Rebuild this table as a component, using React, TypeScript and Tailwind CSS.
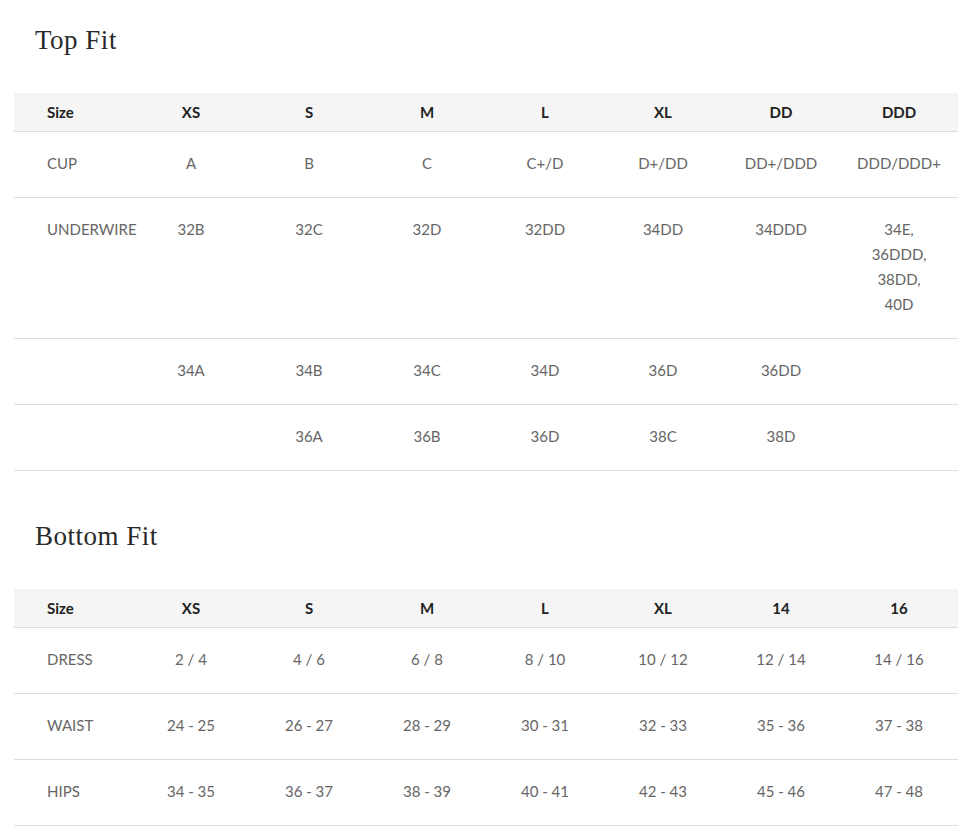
import React from "react";

type Table = {
  title: string;
  head: string[];
  rows: string[][][];
};

const topFit: Table = {
  title: "Top Fit",
  head: ["Size", "XS", "S", "M", "L", "XL", "DD", "DDD"],
  rows: [
    [["CUP"], ["A"], ["B"], ["C"], ["C+/D"], ["D+/DD"], ["DD+/DDD"], ["DDD/DDD+"]],
    [
      ["UNDERWIRE"],
      ["32B"],
      ["32C"],
      ["32D"],
      ["32DD"],
      ["34DD"],
      ["34DDD"],
      ["34E,", "36DDD,", "38DD,", "40D"],
    ],
    [[""], ["34A"], ["34B"], ["34C"], ["34D"], ["36D"], ["36DD"], [""]],
    [[""], [""], ["36A"], ["36B"], ["36D"], ["38C"], ["38D"], [""]],
  ],
};

const bottomFit: Table = {
  title: "Bottom Fit",
  head: ["Size", "XS", "S", "M", "L", "XL", "14", "16"],
  rows: [
    [["DRESS"], ["2 / 4"], ["4 / 6"], ["6 / 8"], ["8 / 10"], ["10 / 12"], ["12 / 14"], ["14 / 16"]],
    [["WAIST"], ["24 - 25"], ["26 - 27"], ["28 - 29"], ["30 - 31"], ["32 - 33"], ["35 - 36"], ["37 - 38"]],
    [["HIPS"], ["34 - 35"], ["36 - 37"], ["38 - 39"], ["40 - 41"], ["42 - 43"], ["45 - 46"], ["47 - 48"]],
  ],
};

const SizeTable = ({ table, first }: { table: Table; first?: boolean }) => (
  <section className={first ? "" : "mt-[49px]"}>
    <h2 className="pl-[35px] text-[27px] leading-[32px] tracking-[0.5px] text-[#2a2a2a] font-['Liberation_Serif',serif]">
      {table.title}
    </h2>

    <div className="mt-[37px] mx-[14px] w-[944px]">
      {/* Header */}
      <div className="grid grid-cols-8 h-[39px] items-center bg-[#f5f5f5] border-b border-[#dcdcdc] text-[15px] font-bold text-[#222]">
        {table.head.map((h, i) => (
          <div key={i} className={i === 0 ? "pl-[33px]" : "text-center"}>
            {h}
          </div>
        ))}
      </div>

      {/* Rows */}
      {table.rows.map((row, r) => (
        <div
          key={r}
          className="grid grid-cols-8 border-b border-[#dcdcdc] pt-[19px] pb-[21px] text-[15px] leading-[25px] text-[#666]"
        >
          {row.map((cell, i) => (
            <div key={i} className={i === 0 ? "pl-[33px]" : "text-center"}>
              {cell.map((line, l) => (
                <div key={l} className="min-h-[25px]">
                  {line}
                </div>
              ))}
            </div>
          ))}
        </div>
      ))}
    </div>
  </section>
);

export default function App() {
  return (
    <div className="w-[976px] min-h-[840px] bg-white pt-[24px] font-['Lato',sans-serif]">
      <SizeTable table={topFit} first />
      <SizeTable table={bottomFit} />
    </div>
  );
}
